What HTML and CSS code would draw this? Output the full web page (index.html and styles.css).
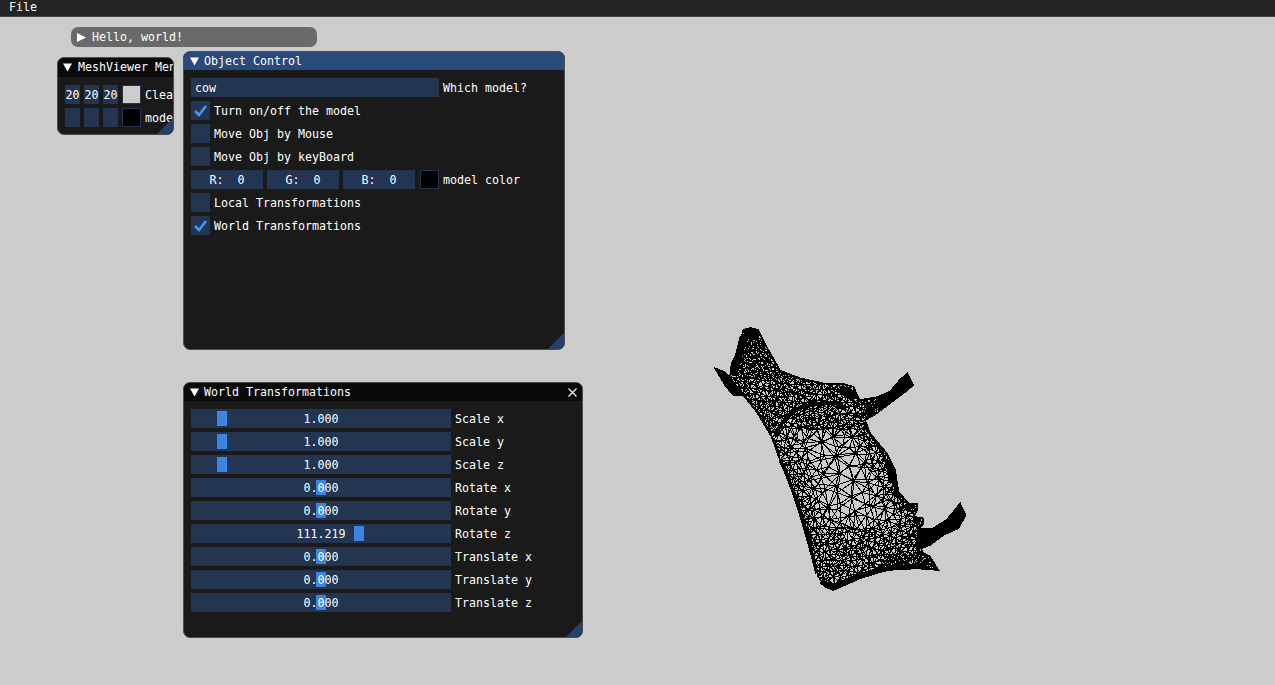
FILE: index.html
```html
<!DOCTYPE html>
<html lang="en">
<head>
<meta charset="utf-8">
<title>MeshViewer</title>
<link rel="stylesheet" href="styles.css">
</head>
<body>
<header class="menubar"><span class="menu-item">File</span></header>
<main class="desktop">
  <section class="win win-hello">
    <div class="title collapsed"><svg class="arrow" viewBox="0 0 9 9"><path d="M0 0L9 4.5L0 9Z"/></svg><span>Hello, world!</span></div>
  </section>

  <section class="win win-mesh">
    <div class="title"><svg class="arrow" viewBox="0 0 9 9"><path d="M0 0.5H9L4.5 8.5Z"/></svg><span>MeshViewer Menu</span></div>
    <div class="body body-mesh">
      <div class="row">
        <div class="frame tiny">20</div><div class="frame tiny">20</div><div class="frame tiny">20</div>
        <div class="swatch swatch-light"></div><span class="label">Clear color</span>
      </div>
      <div class="row">
        <div class="frame tiny"></div><div class="frame tiny"></div><div class="frame tiny"></div>
        <div class="swatch"></div><span class="label">model color</span>
      </div>
    </div>
    <div class="grip"></div>
  </section>

  <section class="win win-object">
    <div class="title active"><svg class="arrow" viewBox="0 0 9 9"><path d="M0 0.5H9L4.5 8.5Z"/></svg><span>Object Control</span></div>
    <div class="body">
      <div class="row"><div class="frame input">cow</div><span class="label">Which model?</span></div>
      <div class="row"><div class="frame check"><svg viewBox="0 0 19 19"><path d="M4 10L8 14L15 5"/></svg></div><span class="label">Turn on/off the model</span></div>
      <div class="row"><div class="frame check"></div><span class="label">Move Obj by Mouse</span></div>
      <div class="row"><div class="frame check"></div><span class="label">Move Obj by keyBoard</span></div>
      <div class="row">
        <div class="frame rgb">R:  0</div><div class="frame rgb">G:  0</div><div class="frame rgb">B:  0</div>
        <div class="swatch swatch-gap"></div><span class="label">model color</span>
      </div>
      <div class="row"><div class="frame check"></div><span class="label">Local Transformations</span></div>
      <div class="row"><div class="frame check"><svg viewBox="0 0 19 19"><path d="M4 10L8 14L15 5"/></svg></div><span class="label">World Transformations</span></div>
    </div>
    <div class="grip"></div>
  </section>

  <section class="win win-world">
    <div class="title"><svg class="arrow" viewBox="0 0 9 9"><path d="M0 0.5H9L4.5 8.5Z"/></svg><span>World Transformations</span>
      <svg class="close" viewBox="0 0 9 9"><path d="M0.5 0.5L8.5 8.5M8.5 0.5L0.5 8.5"/></svg></div>
    <div class="body">
      <div class="row"><div class="frame slider"><i class="grab" style="left:26px"></i><span>1.000</span></div><span class="label">Scale x</span></div>
      <div class="row"><div class="frame slider"><i class="grab" style="left:26px"></i><span>1.000</span></div><span class="label">Scale y</span></div>
      <div class="row"><div class="frame slider"><i class="grab" style="left:26px"></i><span>1.000</span></div><span class="label">Scale z</span></div>
      <div class="row"><div class="frame slider"><i class="grab" style="left:125px"></i><span>0.000</span></div><span class="label">Rotate x</span></div>
      <div class="row"><div class="frame slider"><i class="grab" style="left:125px"></i><span>0.000</span></div><span class="label">Rotate y</span></div>
      <div class="row"><div class="frame slider"><i class="grab" style="left:163px"></i><span>111.219</span></div><span class="label">Rotate z</span></div>
      <div class="row"><div class="frame slider"><i class="grab" style="left:125px"></i><span>0.000</span></div><span class="label">Translate x</span></div>
      <div class="row"><div class="frame slider"><i class="grab" style="left:125px"></i><span>0.000</span></div><span class="label">Translate y</span></div>
      <div class="row"><div class="frame slider"><i class="grab" style="left:125px"></i><span>0.000</span></div><span class="label">Translate z</span></div>
    </div>
    <div class="grip"></div>
  </section>

  <svg id="cow" class="cow" viewBox="0 0 840 840" aria-label="Wireframe cow"></svg>
</main>
<script src="app.js"></script>
</body>
</html>
```
FILE: styles.css
```css
* { box-sizing: border-box; }
html, body { margin: 0; height: 100%; overflow: hidden; }
body {
  background: #cccccc;
  color: #ffffff;
  font: 11.63px/19px "DejaVu Sans Mono", "Liberation Mono", monospace;
}
.menubar {
  height: 17px;
  background: #242424;
  border-bottom: 1px solid #45454f;
  padding-left: 9px;
  line-height: 15px;
}
.desktop { position: relative; height: 668px; }

.win {
  position: absolute;
  background: #1a1a1a;
  border: 1px solid #4d4d55;
  border-radius: 7px;
  overflow: hidden;
}
.win-hello { left: 71px; top: 10px; width: 246px; height: 20px; border: 0; background: #696969; }
.win-mesh { left: 57px; top: 40px; width: 117px; height: 78px; }
.win-object { left: 183px; top: 34px; width: 382px; height: 299px; }
.win-world { left: 183px; top: 365px; width: 400px; height: 256px; }

.title {
  display: flex;
  align-items: center;
  gap: 5px;
  height: 18px;
  padding-left: 6px;
  background: #0a0a0a;
  white-space: nowrap;
}
.title.active { background: #294a7a; }
.title.collapsed { height: 20px; background: transparent; gap: 6px; }
.win-mesh .title { padding-left: 5px; height: 19px; gap: 6px; }
.arrow { width: 9px; height: 9px; fill: #fff; flex: none; }
.close {
  width: 9px; height: 9px;
  margin-left: auto; margin-right: 5px;
  stroke: #f2f2f2; stroke-width: 1.2; fill: none;
}

.body { display: flex; flex-direction: column; gap: 4px; padding: 8px 7px; }
.body-mesh { padding-right: 0; }
.row { display: flex; align-items: center; gap: 4px; height: 19px; }
.label { flex: none; white-space: nowrap; padding-top: 2px; }

.frame { background: #233550; height: 19px; flex: none; line-height: 21px; }
.tiny { width: 15px; text-align: center; }
.input { width: 248px; padding-left: 4px; }
.rgb { width: 72px; text-align: center; white-space: pre; }
.check { width: 19px; }
.check svg { display: block; width: 19px; height: 19px; fill: none; stroke: #4296fa; stroke-width: 2.6; }
.swatch { width: 19px; height: 19px; background: #000; border: 1px solid #233550; flex: none; }
.swatch-light { background: #cccccc; }
.swatch-gap { margin-left: 1px; }

.slider { position: relative; width: 260px; text-align: center; }
.slider span { position: relative; }
.grab { position: absolute; top: 2px; width: 10px; height: 15px; background: #3d85e0; }

.grip {
  position: absolute;
  right: 0; bottom: 0;
  width: 0; height: 0;
  border-style: solid;
  border-width: 0 0 16px 16px;
  border-color: transparent transparent #25416b transparent;
}
.cow { position: absolute; left: 700px; top: 303px; width: 280px; height: 280px; }
```
FILE: app.js
```js
(function () {
  var NS = 'http://www.w3.org/2000/svg';
  var svg = document.getElementById('cow');
  var outline = [[130,30],[150,24],[175,30],[187,55],[205,90],[225,125],[240,152],[300,175],[370,190],[430,192],[460,200],[478,240],[530,232],[570,215],[600,180],[622,160],[640,195],[620,212],[570,250],[530,280],[495,300],[510,340],[560,400],[585,450],[595,515],[625,550],[650,550],[652,570],[640,590],[668,595],[670,612],[655,628],[700,625],[740,600],[765,570],[780,550],[797,585],[775,625],[730,645],[690,675],[650,690],[690,710],[715,750],[650,745],[560,750],[480,775],[400,810],[375,800],[355,770],[335,690],[310,600],[280,510],[240,420],[215,350],[170,275],[130,225],[100,225],[75,195],[45,145],[70,155],[90,170],[95,130],[120,85],[125,50]];
  var seed = 12345;
  function rnd() { seed = (seed * 1664525 + 1013904223) % 4294967296; return seed / 4294967296; }
  function inside(x, y) {
    var c = false;
    for (var i = 0, j = outline.length - 1; i < outline.length; j = i++) {
      var a = outline[i], b = outline[j];
      if ((a[1] > y) !== (b[1] > y) && x < (b[0] - a[0]) * (y - a[1]) / (b[1] - a[1]) + a[0]) c = !c;
    }
    return c;
  }
  function edgeDist(x, y) {
    var best = 1e9;
    for (var i = 0, j = outline.length - 1; i < outline.length; j = i++) {
      var a = outline[i], b = outline[j], ux = b[0] - a[0], uy = b[1] - a[1];
      var t = Math.max(0, Math.min(1, ((x - a[0]) * ux + (y - a[1]) * uy) / (ux * ux + uy * uy)));
      var dx = x - a[0] - t * ux, dy = y - a[1] - t * uy, d = dx * dx + dy * dy;
      if (d < best) best = d;
    }
    return Math.sqrt(best);
  }
  // Target spacing of mesh vertices, in viewBox units (3 units = 1 screen pixel).
  function spacing(x, y) {
    if (y < 130) return 9;
    if (y < 175) return 10;
    if (x > 480 && y < 300) return 8;
    if (x > 650) return 8;
    if (y > 700 && x > 560) return 9;
    var e = edgeDist(x, y);
    var s = 11 + e * 0.2;
    if (y < 330) s = Math.min(s, 13);
    if (y > 620) s = Math.min(s, 15);
    return Math.min(s, 34);
  }
  // One shell of the model: a Delaunay mesh of the silhouette. The render is a
  // see-through wireframe, so a front and a back shell are overlaid.
  function shell() {
    var pts = outline.map(function (p) { return [p[0], p[1]]; });
    for (var n = 0; n < 22000; n++) {
      var x = 40 + rnd() * 760, y = 20 + rnd() * 800;
      if (!inside(x, y)) continue;
      var r = spacing(x, y), r2 = r * r, ok = true;
      for (var k = 0; k < pts.length; k++) {
        var ddx = pts[k][0] - x, ddy = pts[k][1] - y;
        if (ddx * ddx + ddy * ddy < r2) { ok = false; break; }
      }
      if (ok) pts.push([x, y]);
    }
    var all = pts.concat([[-5000, -5000], [6000, -5000], [400, 7000]]);
    var N = pts.length;
    function tri(a, b, c) {
      var A = all[a], B = all[b], C = all[c];
      var D = 2 * (A[0] * (B[1] - C[1]) + B[0] * (C[1] - A[1]) + C[0] * (A[1] - B[1]));
      var a2 = A[0] * A[0] + A[1] * A[1], b2 = B[0] * B[0] + B[1] * B[1], c2 = C[0] * C[0] + C[1] * C[1];
      var ux = (a2 * (B[1] - C[1]) + b2 * (C[1] - A[1]) + c2 * (A[1] - B[1])) / D;
      var uy = (a2 * (C[0] - B[0]) + b2 * (A[0] - C[0]) + c2 * (B[0] - A[0])) / D;
      return { a: a, b: b, c: c, x: ux, y: uy, r: (A[0] - ux) * (A[0] - ux) + (A[1] - uy) * (A[1] - uy) };
    }
    var tris = [tri(N, N + 1, N + 2)];
    function addEdge(edges, p, q) {
      var key = Math.min(p, q) + '_' + Math.max(p, q);
      edges[key] = edges[key] ? null : [p, q];
    }
    for (var i = 0; i < N; i++) {
      var P = all[i], keep = [], edges = {};
      for (var t = 0; t < tris.length; t++) {
        var T = tris[t], ex = P[0] - T.x, ey = P[1] - T.y;
        if (ex * ex + ey * ey < T.r) {
          addEdge(edges, T.a, T.b); addEdge(edges, T.b, T.c); addEdge(edges, T.c, T.a);
        } else keep.push(T);
      }
      for (var key in edges) if (edges[key]) keep.push(tri(edges[key][0], edges[key][1], i));
      tris = keep;
    }
    var seen = {}, d = '';
    function edge(a, b) {
      var key = Math.min(a, b) + '_' + Math.max(a, b);
      if (seen[key]) return;
      seen[key] = 1;
      d += 'M' + all[a][0].toFixed(0) + ' ' + all[a][1].toFixed(0) + 'L' + all[b][0].toFixed(0) + ' ' + all[b][1].toFixed(0);
    }
    tris.forEach(function (T) {
      if (T.a >= N || T.b >= N || T.c >= N) return;
      var cx = (all[T.a][0] + all[T.b][0] + all[T.c][0]) / 3, cy = (all[T.a][1] + all[T.b][1] + all[T.c][1]) / 3;
      if (!inside(cx, cy)) return;
      edge(T.a, T.b); edge(T.b, T.c); edge(T.c, T.a);
    });
    return d;
  }
  function path(pathData, width, fill) {
    var el = document.createElementNS(NS, 'path');
    el.setAttribute('d', pathData);
    el.setAttribute('fill', fill ? '#000' : 'none');
    el.setAttribute('stroke', '#000');
    el.setAttribute('stroke-width', width);
    el.setAttribute('shape-rendering', 'crispEdges');
    svg.appendChild(el);
  }
  path(shell(), 3);
  path(shell(), 3);
  path('M' + outline.map(function (p) { return p.join(' '); }).join('L') + 'Z', 5);
  // Places where the real mesh is so fine that it reads as a solid mass.
  path('M655 628L700 625L740 600L765 570L780 550L797 585L775 625L730 645L690 675L650 690Z', 3, true);
  path('M540 240L570 215L600 180L622 160L640 195L620 212L570 250L535 272Z', 3, true);
  path('M45 145L70 155L90 170L130 225L100 225L75 195Z', 3, true);
  path('M225 345Q260 270 330 255T430 260', 11);
  path('M500 330Q560 400 575 490', 8);
  path('M570 430Q592 490 590 530', 14);
  path('M240 420Q290 520 350 760', 9);
  path('M362 785L400 800L480 765L570 745L680 735', 14);
  path('M130 50L118 100L100 165', 22);
  path('M135 38L175 42', 26);
  path('M420 205L465 235', 26);
  path('M615 560L645 560M640 600L660 605', 16);
})();
```
